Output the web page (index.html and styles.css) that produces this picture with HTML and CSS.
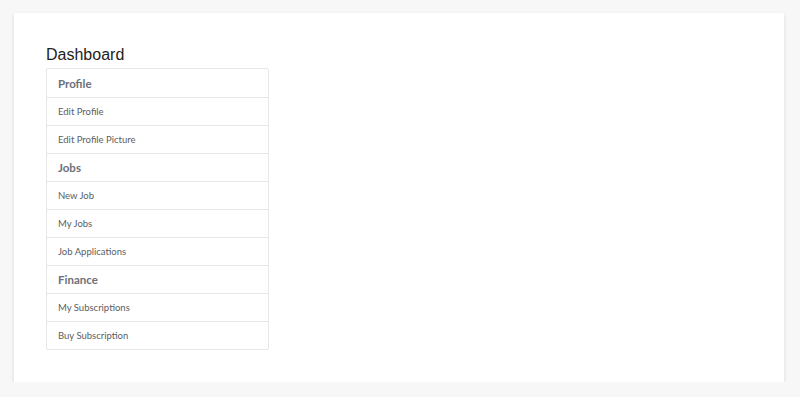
FILE: index.html
```html
<!DOCTYPE html>
<html>
<head>
<meta charset="utf-8">
<link rel="stylesheet" href="styles.css">
</head>
<body>
<div class="card">
  <h1 class="title">Dashboard</h1>
  <ul class="menu">
    <li class="head">Profile</li>
    <li class="item">Edit Profile</li>
    <li class="item">Edit Profile Picture</li>
    <li class="head">Jobs</li>
    <li class="item">New Job</li>
    <li class="item">My Jobs</li>
    <li class="item">Job Applications</li>
    <li class="head">Finance</li>
    <li class="item">My Subscriptions</li>
    <li class="item">Buy Subscription</li>
  </ul>
</div>
</body>
</html>
```
FILE: styles.css
```css
html, body { margin: 0; padding: 0; }
body {
  background: #f7f7f7;
  padding: 13px 16px 0 14px;
  font-family: Lato, "Noto Sans", sans-serif;
}
.card {
  background: #fff;
  padding: 32px;
  box-shadow: 0 2px 4px rgba(0,0,0,0.12);
}
.title {
  margin: 0 0 4px 0;
  font-family: "Liberation Sans", Arial, sans-serif;
  font-weight: normal;
  font-size: 16px;
  line-height: 19px;
  color: #222;
}
.menu {
  list-style: none;
  margin: 0;
  padding: 0;
  width: 223px;
  box-sizing: border-box;
  border: 1px solid #e6e6e6;
  border-radius: 2px;
}
.menu li {
  height: 28px;
  box-sizing: border-box;
  padding: 0 11px;
  display: flex;
  align-items: center;
  border-top: 1px solid #e6e6e6;
}
.menu li:first-child { border-top: none; }
.head {
  font-size: 11.5px;
  font-weight: 700;
  color: #6b7079;
}
.item {
  font-size: 9.5px;
  color: #5a5e63;
}
```
